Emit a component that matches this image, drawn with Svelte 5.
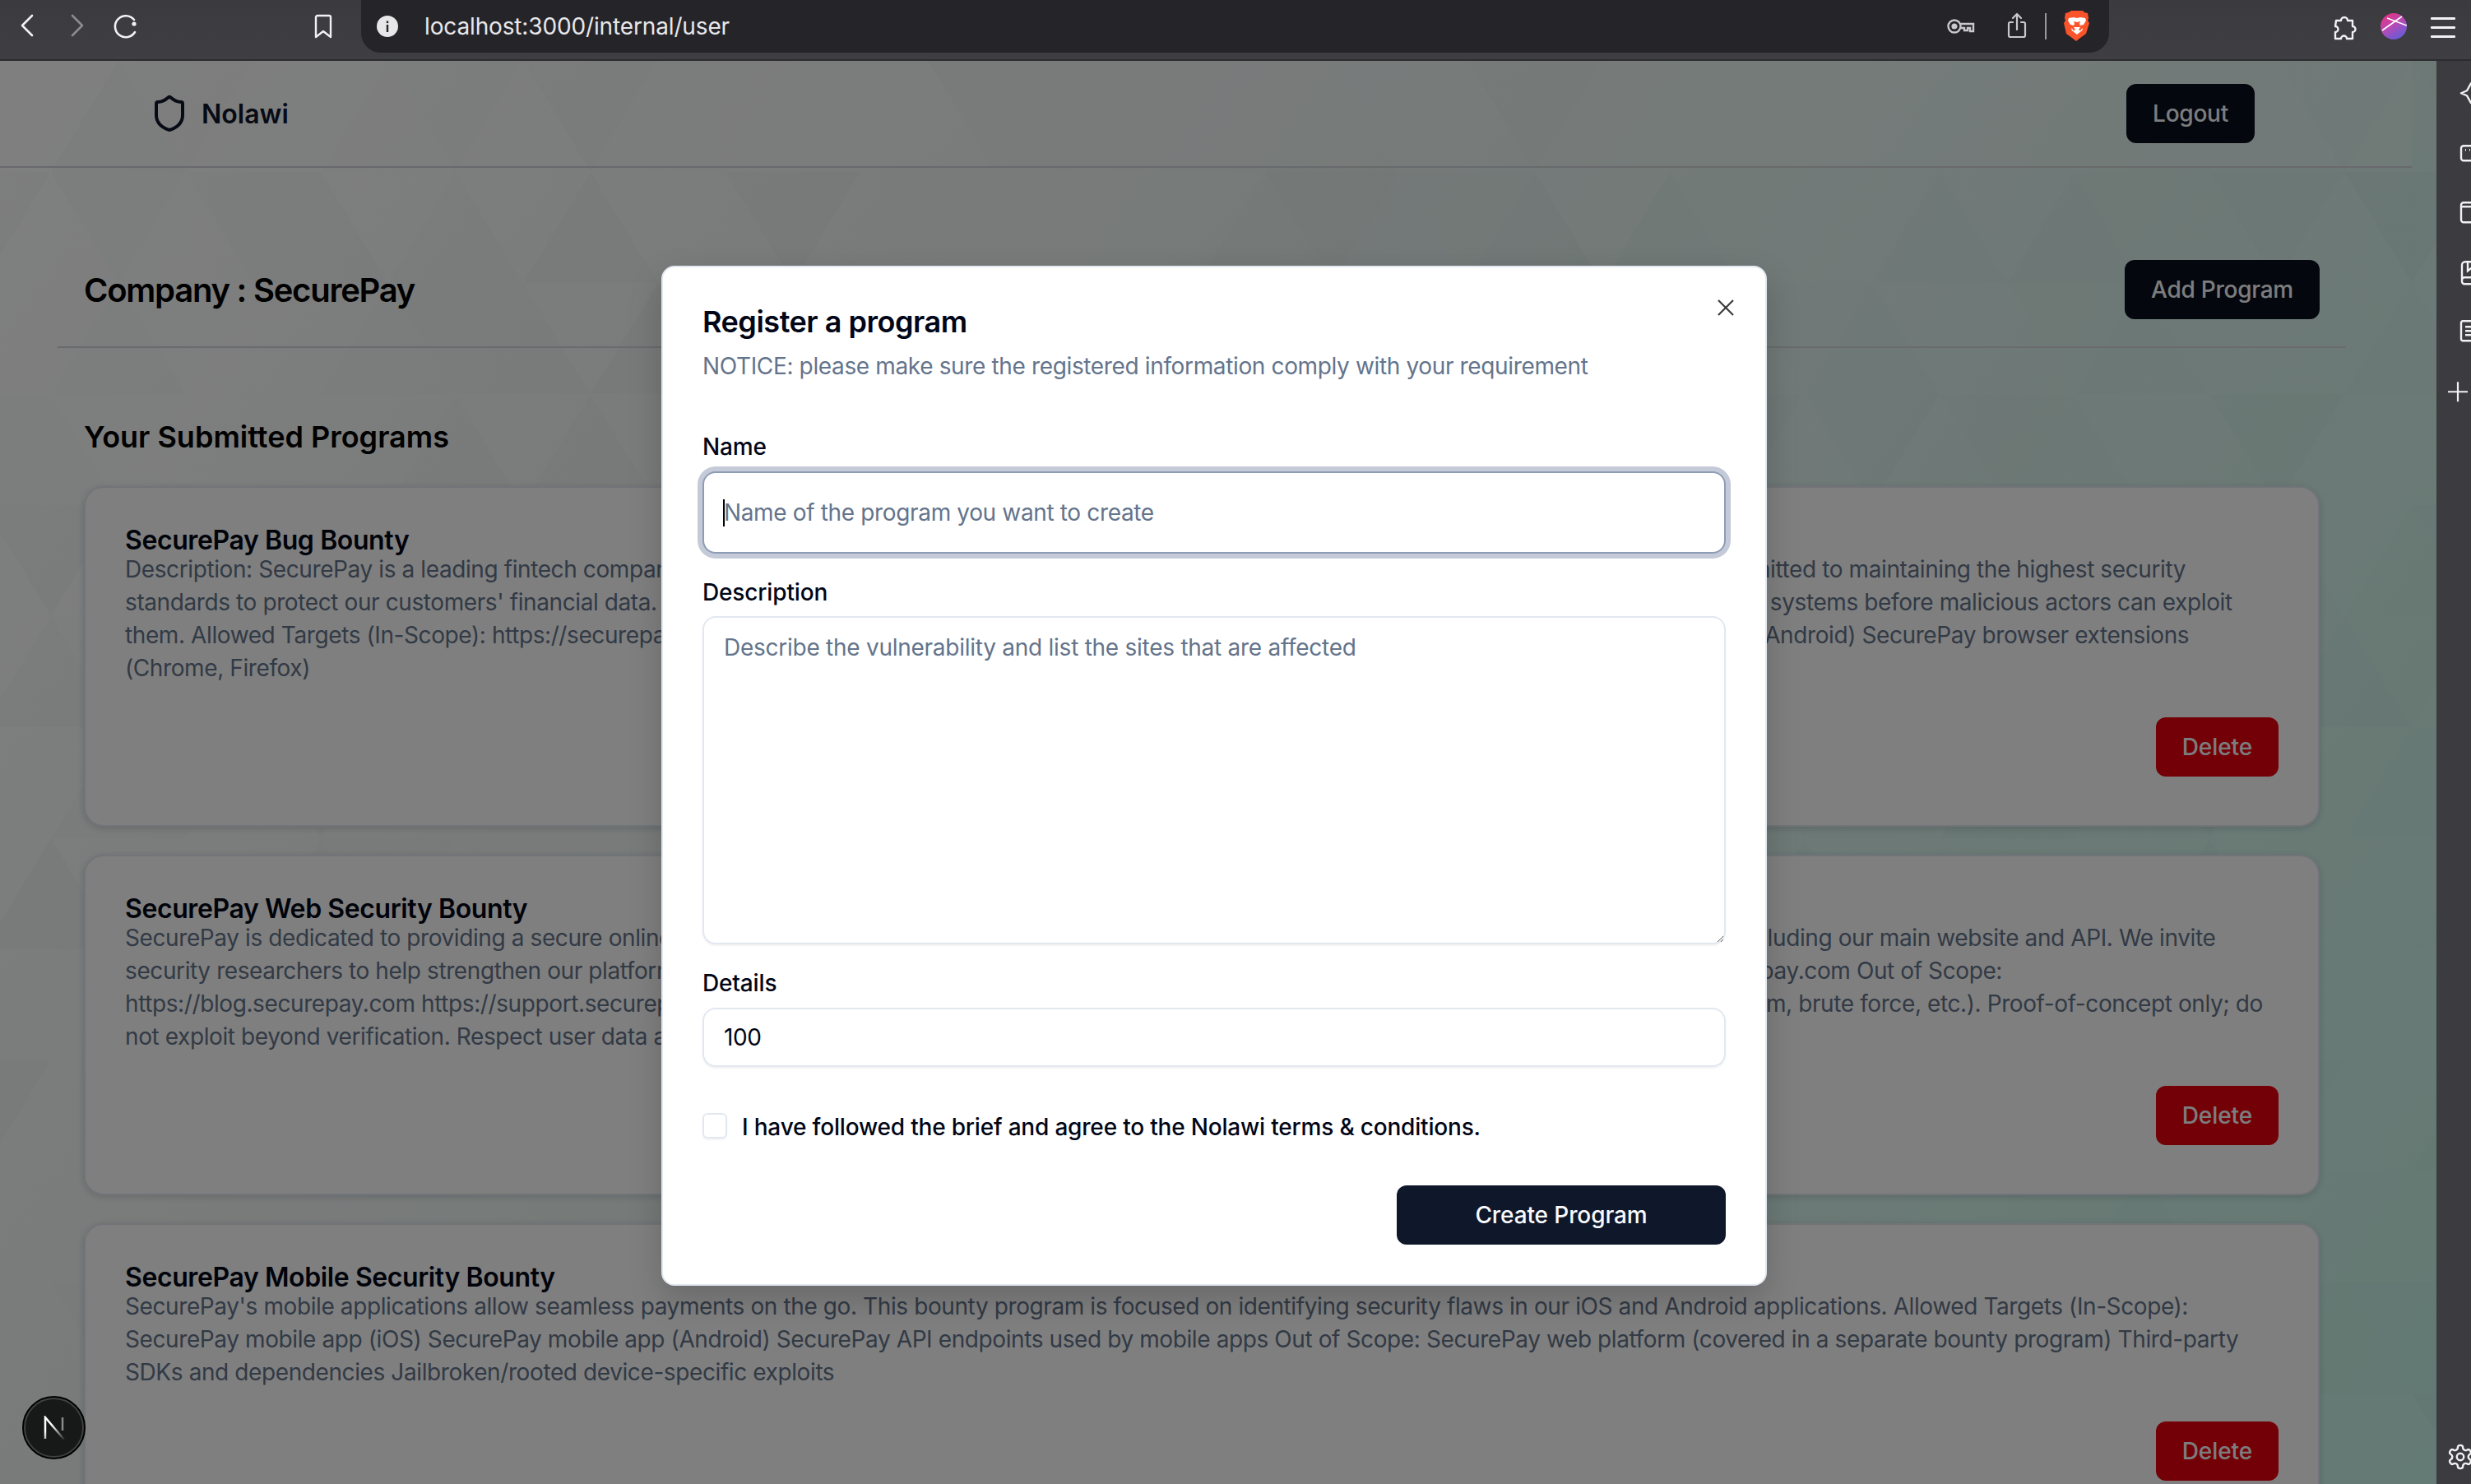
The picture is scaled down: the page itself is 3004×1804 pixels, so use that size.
<script>
  // low-poly background, seeded so it draws the same each time
  const triangles = [];
  let seed = 7;
  const next = () => {
    seed = (seed * 16807) % 2147483647;
    return seed / 2147483647;
  };
  const rowH = 135;
  const half = 82;
  for (let r = 0; r < 14; r++) {
    const y = 73 + r * rowH - 135;
    for (let c = -1; c < 40; c++) {
      const x = c * half + (r % 2 ? half : 0) - 20;
      const up = c % 2 === 0;
      const points = up
        ? `${x},${y + rowH} ${x + half},${y} ${x + half * 2},${y + rowH}`
        : `${x},${y} ${x + half},${y + rowH} ${x + half * 2},${y}`;
      const v = next();
      triangles.push({
        points,
        fill: v > 0.5 ? "#ffffff" : "#0b3a34",
        opacity: (v > 0.5 ? v - 0.5 : 0.5 - v) * 0.04,
      });
    }
  }

  const programs = [
    {
      title: "SecurePay Bug Bounty",
      text: "Description: SecurePay is a leading fintech company providing secure online payment solutions for millions of users & shops around the globe. We're committed to maintaining the highest security standards to protect our customers' financial data. We invite security researchers to responsibly find and report vulnerabilities in our core products plus our systems before malicious actors can exploit them. Allowed Targets (In-Scope): https://securepay.com https://api.securepay.com https://secure-gateway.securepay.com SecurePay mobile apps (iOS & Android) SecurePay browser extensions (Chrome, Firefox)",
    },
    {
      title: "SecurePay Web Security Bounty",
      text: "SecurePay is dedicated to providing a secure online payment experience for all of our customers. This security program covers all of our web platforms, including our main website and API. We invite security researchers to help strengthen our platform by reporting valid vulnerabilities. Allowed Targets (In-Scope): https://securepay.com https://api.securepay.com Out of Scope: https://blog.securepay.com https://support.securepay.com Rules: No big automated scanning, social engineering, phishing or denial of service attacks (spam, brute force, etc.). Proof-of-concept only; do not exploit beyond verification. Respect user data and privacy.",
    },
    {
      title: "SecurePay Mobile Security Bounty",
      text: "SecurePay's mobile applications allow seamless payments on the go. This bounty program is focused on identifying security flaws in our iOS and Android applications. Allowed Targets (In-Scope): SecurePay mobile app (iOS) SecurePay mobile app (Android) SecurePay API endpoints used by mobile apps Out of Scope: SecurePay web platform (covered in a separate bounty program) Third-party SDKs and dependencies Jailbroken/rooted device-specific exploits",
    },
  ];
</script>

<div class="window">
  <header class="toolbar">
    <svg class="back" width="18" height="28" viewBox="0 0 18 28" fill="none" stroke="#f2f2f4" stroke-width="2.6" stroke-linecap="round" stroke-linejoin="round"><path d="M15 2 3 14l12 12" /></svg>
    <svg class="forward" width="18" height="28" viewBox="0 0 18 28" fill="none" stroke="#8b8b90" stroke-width="2.6" stroke-linecap="round" stroke-linejoin="round"><path d="m3 2 12 12L3 26" /></svg>
    <svg class="reload" width="30" height="30" viewBox="0 0 30 30" fill="none" stroke="#f2f2f4" stroke-width="2.6" stroke-linecap="round"><path d="M26 22a13 13 0 1 1-1-15" /><circle cx="25" cy="12" r="2.6" fill="#f2f2f4" stroke="none" /></svg>
    <svg class="bookmark" width="22" height="30" viewBox="0 0 22 30" fill="none" stroke="#f2f2f4" stroke-width="2.4" stroke-linejoin="round"><path d="M2 4a2 2 0 0 1 2-2h14a2 2 0 0 1 2 2v24l-9-7-9 7z" /></svg>

    <div class="address">
      <svg width="26" height="26" viewBox="0 0 26 26"><circle cx="13" cy="13" r="13" fill="#e7e7ea" /><rect x="11.8" y="11" width="2.4" height="9" fill="#252429" /><rect x="11.8" y="6.5" width="2.4" height="2.6" fill="#252429" /></svg>
      <span class="url">localhost:3000/internal/user</span>
      <svg class="key" width="34" height="20" viewBox="0 0 34 20" fill="none" stroke="#c9c9cd" stroke-width="2.4"><circle cx="9" cy="10" r="7.5" /><circle cx="9" cy="10" r="2.4" fill="#c9c9cd" /><path d="M16.5 7H32v9h-4v-4h-3v3h-4v-3h-4.500" /></svg>
      <svg class="share" width="24" height="32" viewBox="0 0 24 32" fill="none" stroke="#c9c9cd" stroke-width="2.2" stroke-linecap="round" stroke-linejoin="round"><path d="M12 21V2M7 7l5-5 5 5M7 12H4a2 2 0 0 0-2 2v14a2 2 0 0 0 2 2h16a2 2 0 0 0 2-2V14a2 2 0 0 0-2-2h-3" /></svg>
      <span class="rule"></span>
      <svg class="lion" width="32" height="37" viewBox="0 0 32 37">
        <path d="M9 0h14l2 2 4 1 1 6-1 3 2 3-4 13-7 5-5 4-5-4-7-5L0 15l2-3-1-3 1-6 4-1z" fill="#fb542b" />
        <path d="M6 9l6-1 4 1 4-1 6 1 1 3-3 5-4 1-1-2 1-3-4 1-4-1 1 3-1 2-4-1-3-5zM12 20h8l-2 3 3 2-5 4-5-4 3-2zM9 21l3 3-2 1zM23 21l-3 3 2 1z" fill="#fff" />
      </svg>
    </div>

    <svg class="puzzle" width="32" height="32" viewBox="0 0 32 32" fill="none" stroke="#f2f2f4" stroke-width="2.4" stroke-linejoin="round"><path d="M6 8h6a4 4 0 1 1 8 0h6v7a3.500 3.500 0 1 1 0 7v8h-7a3.500 3.500 0 1 0-7 0H5v-8a3.500 3.500 0 1 0 0-7z" /></svg>
    <svg class="profile" width="32" height="32" viewBox="0 0 32 32">
      <defs><linearGradient id="prof" x1="0.2" y1="0" x2="0.8" y2="1"><stop offset="0" stop-color="#e8327f" /><stop offset="0.5" stop-color="#b14bb8" /><stop offset="1" stop-color="#5a5fdc" /></linearGradient></defs>
      <circle cx="16" cy="16" r="16" fill="url(#prof)" />
      <path d="M2 21 26 4M8 6l24 9" stroke="#fff" stroke-width="1.600" fill="none" />
    </svg>
    <div class="menu"><span></span><span></span><span></span></div>
  </header>

  <div class="body">
    <div class="page">
      <svg class="poly" width="2962" height="1730" viewBox="0 73 2962 1730">
        {#each triangles as t}
          <polygon points={t.points} fill={t.fill} fill-opacity={t.opacity} />
        {/each}
      </svg>

      <nav class="nav">
        <div class="brand">
          <svg width="48" height="48" viewBox="0 0 24 24" fill="none" stroke="#0f172a" stroke-width="2" stroke-linecap="round" stroke-linejoin="round"><path d="M20 13c0 5-3.500 7.500-7.660 8.950a1 1 0 0 1-.67-.01C7.500 20.500 4 18 4 13V6a1 1 0 0 1 1-1c2 0 4.500-1.200 6.240-2.720a1.170 1.170 0 0 1 1.520 0C14.510 3.810 17 5 19 5a1 1 0 0 1 1 1z" /></svg>
          <span>Nolawi</span>
        </div>
        <button class="btn">Logout</button>
      </nav>

      <main class="content">
        <div class="head">
          <h1>Company : SecurePay</h1>
          <button class="btn">Add Program</button>
        </div>
        <h2>Your Submitted Programs</h2>
        <div class="list">
          {#each programs as p}
            <article class="card">
              <h3>{p.title}</h3>
              <p>{p.text}</p>
              <div class="actions"><button class="btn danger">Delete</button></div>
            </article>
          {/each}
        </div>
      </main>

      <div class="overlay"></div>

      <div class="badge">
        <svg width="28" height="30" viewBox="0 0 28 30">
          <defs><linearGradient id="nfade" gradientUnits="userSpaceOnUse" x1="3" y1="2" x2="26" y2="29"><stop offset="0.35" stop-color="#fff" /><stop offset="1" stop-color="#fff" stop-opacity="0.05" /></linearGradient></defs>
          <path d="M3 28V2l23 27" fill="none" stroke="url(#nfade)" stroke-width="2.500" />
          <path d="M24 2v16" fill="none" stroke="#8a8a8a" stroke-width="2.500" />
        </svg>
      </div>

      <section class="modal">
        <svg class="close" width="20" height="20" viewBox="0 0 20 20" stroke="#3c3c3c" stroke-width="2.200" fill="none"><path d="M1 1l18 18M19 1 1 19" /></svg>
        <h4>Register a program</h4>
        <p class="notice">NOTICE: please make sure the registered information comply with your requirement</p>

        <label class="first" for="name">Name</label>
        <div class="focus-wrap">
          <input id="name" class="field focused" placeholder="Name of the program you want to create" />
          <span class="caret"></span>
        </div>

        <label for="desc">Description</label>
        <textarea id="desc" class="field area" placeholder="Describe the vulnerability and list the sites that are affected"></textarea>

        <label for="details">Details</label>
        <input id="details" class="field short" value="100" />

        <div class="agree">
          <span class="check"></span>
          <span class="agree-text">I have followed the brief and agree to the Nolawi terms &amp; conditions.</span>
        </div>

        <div class="submit"><button class="create">Create Program</button></div>
      </section>
    </div>

    <aside class="rail">
      <svg class="tool" width="30" height="72.5" viewBox="0 0 30 28" fill="none" stroke="#f2f2f4" stroke-width="2.400" stroke-linejoin="round"><path d="M14 2 9 11l-7 3 7 3 5 9 5-9 7-3-7-3z" /></svg>
      <svg class="tool" width="30" height="72.5" viewBox="0 0 30 22" fill="none" stroke="#f2f2f4" stroke-width="2.400"><rect x="2" y="2" width="30" height="18" rx="3" /><path d="M7 7h1M12 7h1" /></svg>
      <svg class="tool" width="30" height="72.5" viewBox="0 0 30 28" fill="none" stroke="#f2f2f4" stroke-width="2.400"><rect x="2" y="2" width="34" height="24" rx="3" /><path d="M2 7h30" /></svg>
      <svg class="tool" width="30" height="72.5" viewBox="0 0 30 30" fill="none" stroke="#f2f2f4" stroke-width="2.400"><path d="M34 2H7a4 4 0 0 0-4 4v20a3 3 0 0 0 3 3h28M3 24a3 3 0 0 1 3-3h28M10 2v11l4-3 4 3" /></svg>
      <svg class="tool" width="30" height="72.5" viewBox="0 0 30 30" fill="none" stroke="#f2f2f4" stroke-width="2.400"><rect x="2" y="2" width="30" height="24" rx="2" /><path d="M7 9h20M7 14h20M7 19h20" /></svg>
      <svg class="plus" width="24" height="72.5" viewBox="0 0 24 24" stroke="#f2f2f4" stroke-width="2.200"><path d="M12 0v24M0 12h24" /></svg>
      <svg class="gear" width="34" height="34" viewBox="0 0 24 24" fill="none" stroke="#f2f2f4" stroke-width="1.700" stroke-linecap="round" stroke-linejoin="round"><path d="M12.220 2h-.44a2 2 0 0 0-2 2v.18a2 2 0 0 1-1 1.730l-.43.25a2 2 0 0 1-2 0l-.15-.08a2 2 0 0 0-2.730.73l-.22.38a2 2 0 0 0 .73 2.730l.15.1a2 2 0 0 1 1 1.720v.51a2 2 0 0 1-1 1.740l-.15.09a2 2 0 0 0-.73 2.730l.22.38a2 2 0 0 0 2.730.73l.15-.08a2 2 0 0 1 2 0l.43.25a2 2 0 0 1 1 1.730V20a2 2 0 0 0 2 2h.44a2 2 0 0 0 2-2v-.18a2 2 0 0 1 1-1.730l.43-.25a2 2 0 0 1 2 0l.15.08a2 2 0 0 0 2.730-.73l.22-.39a2 2 0 0 0-.73-2.730l-.15-.08a2 2 0 0 1-1-1.740v-.5a2 2 0 0 1 1-1.740l.15-.09a2 2 0 0 0 .73-2.730l-.22-.38a2 2 0 0 0-2.730-.73l-.15.08a2 2 0 0 1-2 0l-.43-.25a2 2 0 0 1-1-1.730V4a2 2 0 0 0-2-2z" /><circle cx="12" cy="12" r="3" /></svg>
    </aside>
  </div>
</div>

<style>
  :global(body) {
    margin: 0;
    background: #3b3b40;
  }
  .window {
    width: 3004px;
    height: 1804px;
    display: flex;
    flex-direction: column;
    overflow: hidden;
    font-family: Inter, "Liberation Sans", sans-serif;
  }

  .toolbar {
    height: 74px;
    flex: none;
    box-sizing: border-box;
    display: flex;
    align-items: flex-start;
    background: linear-gradient(#3a3a3f, #3e3e43);
    border-bottom: 2px solid #2c2c30;
  }
  .toolbar > svg {
    margin-top: 17px;
  }
  .toolbar .back { margin-left: 24px; }
  .toolbar .forward { margin-left: 43px; }
  .toolbar .reload { margin-left: 35px; }
  .toolbar .bookmark { margin-left: 214px; }
  .toolbar .puzzle { margin-left: 270px; }
  .toolbar .profile { margin-left: 28px; margin-top: 16px; }
  .address {
    margin-left: 35px;
    width: 2125px;
    height: 64px;
    box-sizing: border-box;
    padding-left: 19px;
    display: flex;
    align-items: center;
    background: #252429;
    border-radius: 0 0 24px 24px;
  }
  .url {
    margin-left: 32px;
    font-size: 28px;
    letter-spacing: -0.14px;
    color: #e7e7ea;
    width: 1851px;
  }
  .key { margin-left: 0; }
  .share { margin-left: 39px; margin-top: -2px; }
  .rule {
    width: 2px;
    height: 32px;
    margin-left: 22px;
    background: #9a9a9e;
  }
  .lion { margin-left: 21px; margin-top: -1px; }
  .menu {
    margin-left: 29px;
    margin-top: 21px;
    width: 30px;
    display: flex;
    flex-direction: column;
    gap: 8px;
  }
  .menu span {
    height: 3px;
    background: #f2f2f4;
    border-radius: 1px;
  }

  .body {
    flex: 1;
    display: flex;
    min-height: 0;
  }
  .page {
    position: relative;
    width: 2962px;
    flex: none;
    overflow: hidden;
    background: linear-gradient(125deg, #ffffff 0%, #f3f7f6 30%, #dff3ee 62%, #c9f5e8 100%);
  }
  .poly {
    position: absolute;
    inset: 0;
  }
  .rail {
    flex: 1;
    background: #3b3b40;
    overflow: hidden;
    display: flex;
    flex-direction: column;
    padding-top: 3px;
  }
  .rail svg { flex: none; }
  .rail .tool { margin-left: 28px; }
  .rail .plus { margin-left: 14px; }
  .rail .gear { margin-left: 12px; margin-top: auto; margin-bottom: 16px; }

  .nav {
    position: relative;
    width: 2932px;
    height: 130px;
    box-sizing: border-box;
    padding: 28px 191px 0 178px;
    display: flex;
    justify-content: space-between;
    align-items: flex-start;
    background: rgba(255, 255, 255, 0.2);
    border-bottom: 2px solid #d0d3d8;
  }
  .brand {
    display: flex;
    align-items: center;
    gap: 15px;
    height: 72px;
    margin-left: 4px;
    font-size: 32px;
    font-weight: 600;
    color: #0f172a;
  }

  .btn {
    height: 72px;
    padding: 0 32px;
    border: 0;
    border-radius: 12px;
    background: #0a0f1d;
    color: #f8fafc;
    font: 500 28px Inter, sans-serif;
    letter-spacing: -0.25px;
  }
  .btn.danger {
    background: #e9000f;
    padding: 0 32px;
    letter-spacing: -0.1px;
  }

  .content {
    position: relative;
    width: 2782px;
    margin-left: 70px;
    box-sizing: border-box;
    padding: 0 32px;
  }
  .head {
    margin: 0 -32px;
    padding: 112px 32px 33px;
    display: flex;
    justify-content: space-between;
    align-items: center;
    border-bottom: 2px solid #d4d6dc;
  }
  h1 {
    margin: 0;
    font-size: 40px;
    font-weight: 600;
    letter-spacing: -1.25px;
    color: #000;
  }
  h2 {
    margin: 84px 0 0;
    height: 48px;
    line-height: 48px;
    font-size: 36px;
    font-weight: 600;
    color: #000;
  }
  .list {
    margin-top: 36px;
    display: flex;
    flex-direction: column;
    gap: 34px;
  }
  .card {
    box-sizing: border-box;
    padding: 44px 48px 59px;
    border: 2px solid #e2e8f0;
    border-radius: 24px;
    background: #fff;
    box-shadow: 0 2px 8px rgba(15, 23, 42, 0.16);
  }
  h3 {
    margin: 0;
    height: 35px;
    line-height: 40px;
    font-size: 32px;
    font-weight: 600;
    letter-spacing: -0.4px;
    color: #020617;
  }
  .card p {
    margin: 0;
    font-size: 28px;
    line-height: 40px;
    letter-spacing: -0.4px;
    color: #64748b;
  }
  .actions {
    margin-top: 40px;
    display: flex;
    justify-content: flex-end;
  }

  .overlay {
    position: absolute;
    inset: 0;
    background: rgba(0, 0, 0, 0.5);
  }

  .badge {
    position: absolute;
    left: 28px;
    top: 1624px;
    width: 75px;
    height: 75px;
    box-sizing: border-box;
    border: 3px solid #3f4140;
    outline: 2px solid #000;
    outline-offset: -1px;
    border-radius: 50%;
    background: #161918;
    display: flex;
    align-items: center;
    justify-content: center;
  }

  .modal {
    position: absolute;
    left: 804px;
    top: 249px;
    width: 1344px;
    height: 1240px;
    box-sizing: border-box;
    padding: 48px;
    background: #fff;
    border: 2px solid #e2e8f0;
    border-radius: 16px;
    box-shadow: 0 16px 40px rgba(0, 0, 0, 0.18);
  }
  .close {
    position: absolute;
    left: 1282px;
    top: 39px;
  }
  h4 {
    margin: 0;
    font-size: 36px;
    line-height: 36px;
    font-weight: 600;
    letter-spacing: -0.48px;
    color: #020617;
  }
  .notice {
    margin: 16px 0 0;
    font-size: 28px;
    line-height: 40px;
    letter-spacing: -0.36px;
    color: #64748b;
  }
  label {
    display: block;
    margin-top: 33px;
    height: 28px;
    font-size: 28px;
    line-height: 28px;
    font-weight: 500;
    letter-spacing: -0.15px;
    color: #020617;
  }
  label.first { margin-top: 64px; }
  .field {
    display: block;
    width: 100%;
    box-sizing: border-box;
    margin-top: 16px;
    padding: 0 24px;
    border: 2px solid #e2e8f0;
    border-radius: 16px;
    background: #fff;
    box-shadow: 0 2px 2px rgba(15, 23, 42, 0.05);
    font: 400 28px Inter, sans-serif;
    letter-spacing: -0.35px;
    color: #020617;
    outline: none;
  }
  .field::placeholder {
    color: #64748b;
    opacity: 1;
  }
  .focus-wrap {
    position: relative;
  }
  .focused {
    height: 100px;
    border-color: #8d9db5;
    box-shadow: 0 0 0 6px #c4cad8;
  }
  .caret {
    position: absolute;
    left: 25px;
    top: 34px;
    width: 2px;
    height: 33px;
    background: #000;
  }
  .area {
    height: 399px;
    padding: 18px 24px;
    margin-top: 15px;
    resize: vertical;
    line-height: 36px;
    letter-spacing: -0.26px;
  }
  .short {
    height: 72px;
  }
  .agree {
    margin-top: 56px;
    height: 31px;
    display: flex;
    align-items: flex-start;
    gap: 18px;
    font-size: 28px;
    font-weight: 500;
    letter-spacing: -0.19px;
    color: #020617;
  }
  .agree-text {
    line-height: 34px;
  }
  .check {
    width: 30px;
    height: 31px;
    flex: none;
    box-sizing: border-box;
    border: 2px solid #e2e8f0;
    border-radius: 6px;
    box-shadow: 0 2px 2px rgba(15, 23, 42, 0.05);
  }
  .submit {
    margin-top: 57px;
    display: flex;
    justify-content: flex-end;
  }
  .create {
    width: 400px;
    height: 72px;
    border: 0;
    border-radius: 12px;
    background: #0f172a;
    color: #f8fafc;
    font: 500 28px Inter, sans-serif;
    letter-spacing: -0.1px;
  }
</style>
